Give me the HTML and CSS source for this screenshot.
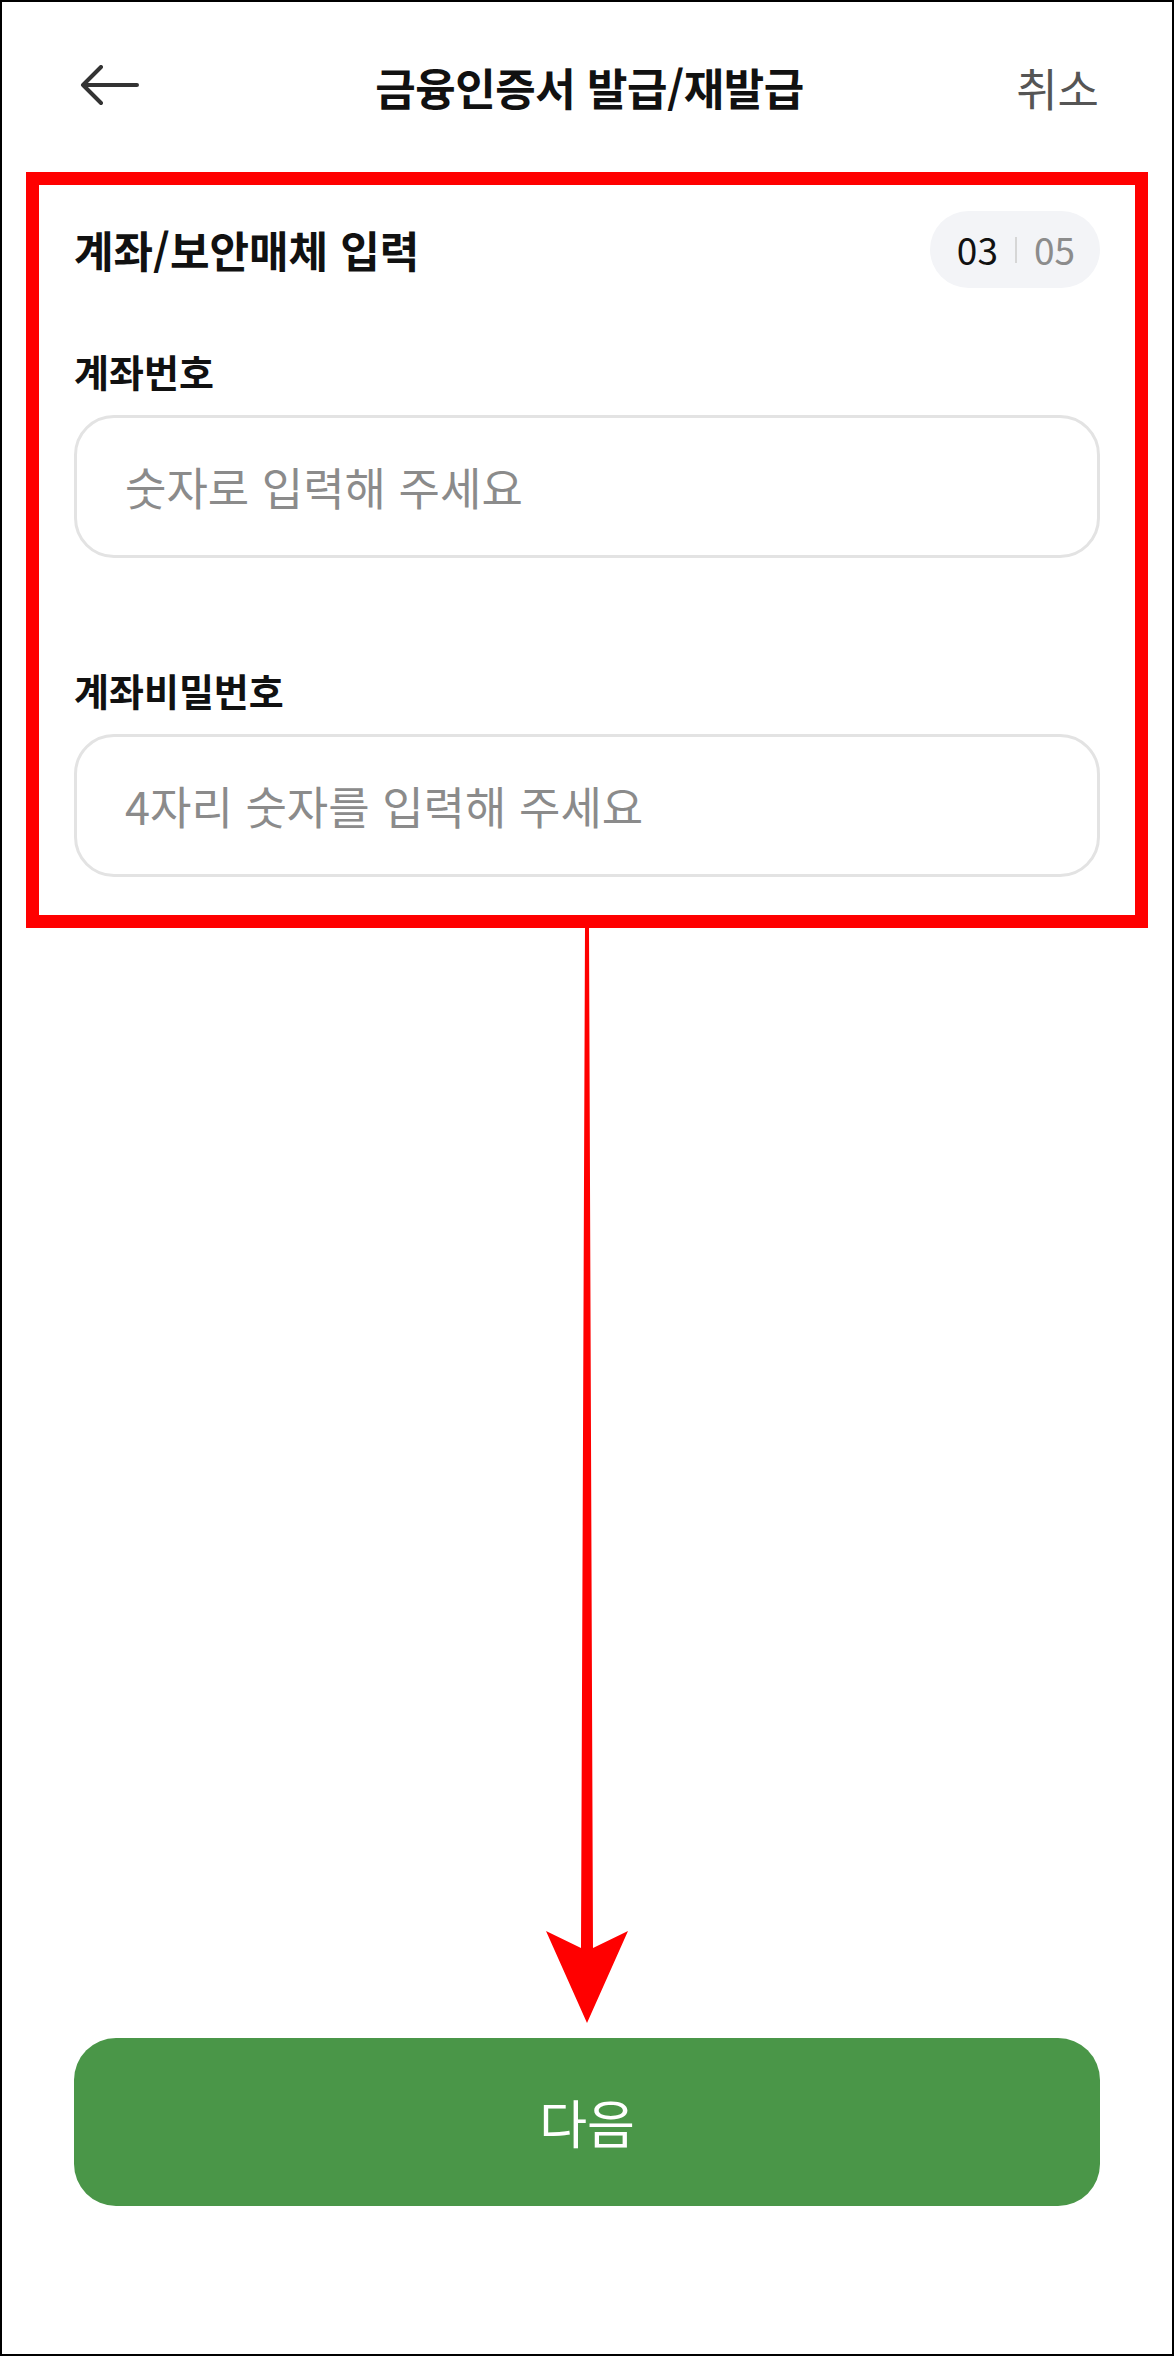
FILE: index.html
```html
<!DOCTYPE html>
<html lang="ko">
<head>
<meta charset="utf-8">
<title>금융인증서 발급/재발급</title>
<link rel="stylesheet" href="styles.css">
</head>
<body>
<div class="frame">
  <header class="header">
    <button class="back" type="button" aria-label="뒤로">
      <svg viewBox="0 0 60 44" width="60" height="44" aria-hidden="true">
        <path d="M3 20 H57 M21 2 L3 20 L21 38" fill="none" stroke="#333" stroke-width="4" stroke-linecap="round" stroke-linejoin="round"/>
      </svg>
    </button>
    <h1 class="title">금융인증서 발급/재발급</h1>
    <span class="cancel">취소</span>
  </header>

  <section class="section">
    <div class="section-head">
      <h2 class="section-title">계좌/보안매체 입력</h2>
      <div class="badge"><span class="cur">03</span><span class="sep"></span><span class="total">05</span></div>
    </div>
    <div class="field field-first">
      <label class="label" for="acc">계좌번호</label>
      <input class="input" id="acc" type="text" placeholder="숫자로 입력해 주세요">
    </div>
    <div class="field field-second">
      <label class="label" for="pw">계좌비밀번호</label>
      <input class="input" id="pw" type="text" placeholder="4자리 숫자를 입력해 주세요">
    </div>
  </section>

  <button class="next" type="button">다음</button>

  <svg class="annot" viewBox="0 0 1174 2356" width="1174" height="2356" aria-hidden="true">
    <polygon points="585,928 589,928 593,1948 628,1931 587,2023 546,1931 581,1948" fill="#ff0000"/>
  </svg>
</div>
</body>
</html>
```

FILE: styles.css
```css
html, body {
  margin: 0;
  padding: 0;
  background: #fff;
}

.frame {
  position: relative;
  box-sizing: border-box;
  width: 1174px;
  height: 2356px;
  border: 2px solid #000;
  display: flex;
  flex-direction: column;
  background: #fff;
  font-family: "Noto Sans CJK KR", "Noto Sans", sans-serif;
  color: #111;
  overflow: hidden;
}

.header {
  height: 170px;
  flex: none;
  display: grid;
  grid-template-columns: 1fr auto 1fr;
  align-items: center;
  padding: 0 73px 0 78px;
}

.back {
  justify-self: start;
  display: block;
  width: 60px;
  height: 44px;
  padding: 0;
  margin: 0;
  border: none;
  background: none;
}

.back svg {
  display: block;
}

.title {
  margin: 0;
  font-size: 44px;
  font-weight: 700;
  line-height: 1;
  color: #111;
  letter-spacing: -0.5px;
}

.cancel {
  justify-self: end;
  font-size: 45px;
  line-height: 1;
  color: #555;
}

.section {
  flex: none;
  margin: 0 24px;
  border: 13px solid #ff0000;
  padding: 26px 35px 38px;
}

.section-head {
  display: flex;
  justify-content: space-between;
  align-items: center;
  height: 77px;
}

.section-title {
  margin: 0;
  font-size: 43px;
  font-weight: 700;
  line-height: 1;
  color: #111;
}

.badge {
  height: 77px;
  box-sizing: border-box;
  padding: 0 25px 0 27px;
  border-radius: 39px;
  background: #f3f4f7;
  display: flex;
  align-items: center;
  font-size: 37px;
  line-height: 1;
}

.cur {
  color: #111;
}

.sep {
  width: 2px;
  height: 26px;
  background: #d6d6d6;
  margin: 0 17px;
}

.total {
  color: #8c8c8c;
}

.field {
  display: flex;
  flex-direction: column;
}

.field-first {
  margin-top: 59px;
}

.field-second {
  margin-top: 108px;
}

.label {
  font-size: 38px;
  font-weight: 700;
  line-height: 48px;
  margin-bottom: 20px;
  color: #111;
}

.input {
  display: block;
  width: 100%;
  height: 143px;
  box-sizing: border-box;
  margin: 0;
  border: 3px solid #e3e3e3;
  border-radius: 40px;
  padding: 0 48px;
  background: #fff;
  font-family: inherit;
  font-size: 45px;
  color: #111;
  outline: none;
}

.input::placeholder {
  color: #8b8b8b;
  opacity: 1;
}

.next {
  flex: none;
  margin: auto 72px 148px;
  height: 168px;
  border: none;
  border-radius: 42px;
  background: #4a9648;
  color: #fff;
  font-family: inherit;
  font-size: 52px;
  font-weight: 400;
  line-height: 1;
  padding: 0;
}

.annot {
  position: absolute;
  top: -2px;
  left: -2px;
  pointer-events: none;
}
```
